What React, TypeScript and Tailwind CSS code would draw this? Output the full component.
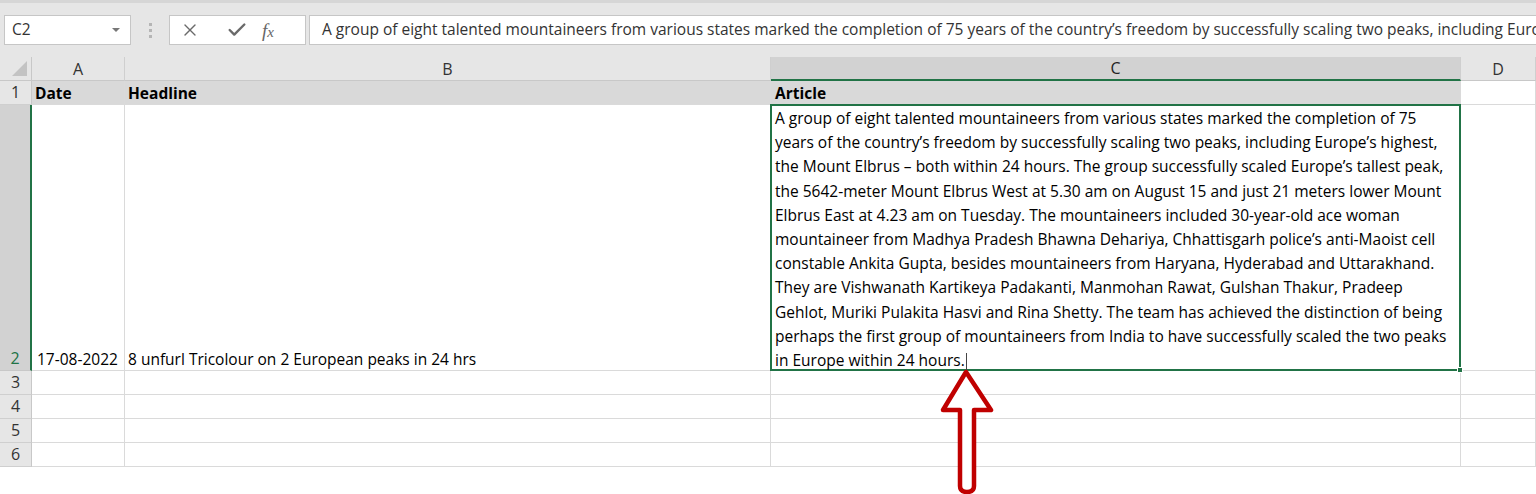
import { X, Check } from 'lucide-react'

const article = [
  'A group of eight talented mountaineers from various states marked the completion of 75',
  'years of the country’s freedom by successfully scaling two peaks, including Europe’s highest,',
  'the Mount Elbrus – both within 24 hours. The group successfully scaled Europe’s tallest peak,',
  'the 5642-meter Mount Elbrus West at 5.30 am on August 15 and just 21 meters lower Mount',
  'Elbrus East at 4.23 am on Tuesday. The mountaineers included 30-year-old ace woman',
  'mountaineer from Madhya Pradesh Bhawna Dehariya, Chhattisgarh police’s anti-Maoist cell',
  'constable Ankita Gupta, besides mountaineers from Haryana, Hyderabad and Uttarakhand.',
  'They are Vishwanath Kartikeya Padakanti, Manmohan Rawat, Gulshan Thakur, Pradeep',
  'Gehlot, Muriki Pulakita Hasvi and Rina Shetty. The team has achieved the distinction of being',
  'perhaps the first group of mountaineers from India to have successfully scaled the two peaks',
  'in Europe within 24 hours.',
]

const formulaText =
  'A group of eight talented mountaineers from various states marked the completion of 75 years of the country’s freedom by successfully scaling two peaks, including Europe’s highest, the Mount Elbrus – both within 24 hours.'

function Toolbar() {
  return (
    <div className="h-[57px] bg-[#e6e6e6] border-t-[3px] border-[#d6d6d6] flex items-start pt-[12px] pl-[4px] gap-0">
      <div className="w-[127px] h-[30px] bg-white border border-[#c6c6c6] flex items-center justify-between pl-[7px] pr-[10px]">
        <span className="text-[15.5px] text-[#333]">C2</span>
        <span className="w-0 h-0 border-l-[4px] border-r-[4px] border-t-[4px] border-l-transparent border-r-transparent border-t-[#777]" />
      </div>
      <div className="w-[38px] h-[30px] flex flex-col items-center justify-center gap-[3px]">
        <span className="w-[3px] h-[3px] bg-[#b5b5b5]" />
        <span className="w-[3px] h-[3px] bg-[#b5b5b5]" />
        <span className="w-[3px] h-[3px] bg-[#b5b5b5]" />
      </div>
      <div className="w-[137px] h-[30px] bg-white border border-[#c6c6c6] flex items-center">
        <X className="w-[20px] h-[20px] text-[#6a6a6a] ml-[10px]" strokeWidth={1.6} />
        <Check className="w-[22px] h-[22px] text-[#6a6a6a] ml-[26px]" strokeWidth={2.6} />
        <span className="ml-[14px] text-[19px] italic text-[#666] font-['Liberation_Serif',serif] leading-none">
          f<span className="text-[15px]">x</span>
        </span>
      </div>
      <div className="ml-[3px] flex-1 h-[30px] bg-white border border-[#c6c6c6] border-r-0 flex items-center pl-[12px] overflow-hidden">
        <span className="whitespace-nowrap text-[15.5px] text-[#333]">{formulaText}</span>
      </div>
    </div>
  )
}

function ColHead({ label, active }: { label: string; active?: boolean }) {
  return (
    <div
      className={`h-[24px] flex items-center justify-center text-[16px] border-r border-[#cfcfcf] ${
        active ? 'bg-[#d2d2d2] border-b-2 border-b-[#217346] text-[#222]' : 'bg-[#e6e6e6] border-b border-b-[#c8c8c8] text-[#333]'
      }`}
    >
      {label}
    </div>
  )
}

function RowHead({ n, h, active }: { n: number; h: string; active?: boolean }) {
  return (
    <div
      className={`${h} flex items-end justify-center pb-[1px] text-[16px] leading-[22px] border-b ${
        active
          ? 'bg-[#d2d2d2] border-b-[#c8c8c8] border-r-2 border-r-[#217346] text-[#217346]'
          : 'bg-[#e6e6e6] border-b-[#cfcfcf] border-r border-r-[#c8c8c8] text-[#333]'
      }`}
    >
      {n}
    </div>
  )
}

function Cell({ children, className = '' }: { children?: React.ReactNode; className?: string }) {
  return <div className={`border-r border-b border-[#dadada] ${className}`}>{children}</div>
}

export default function App() {
  return (
    <div className="w-[1536px] h-[494px] bg-white overflow-hidden relative font-['Open_Sans',sans-serif]">
      <Toolbar />
      <div className="grid grid-cols-[32px_93px_646px_690px_1fr]">
        {/* header row */}
        <div className="h-[24px] bg-[#e6e6e6] border-r border-b border-[#c8c8c8] flex items-end justify-end pr-[4px] pb-[4px]">
          <span className="w-0 h-0 border-l-[15px] border-b-[15px] border-l-transparent border-b-[#c3c3c3]" />
        </div>
        <ColHead label="A" />
        <ColHead label="B" />
        <ColHead label="C" active />
        <ColHead label="D" />

        {/* row 1 */}
        <RowHead n={1} h="h-[24px]" />
        <Cell className="bg-[#d9d9d9] border-[#d9d9d9] h-[24px] flex items-end pl-[3px] text-[15.5px] leading-[22px] font-bold text-black">Date</Cell>
        <Cell className="bg-[#d9d9d9] border-[#d9d9d9] h-[24px] flex items-end pl-[3px] text-[15.5px] leading-[22px] font-bold text-black">Headline</Cell>
        <Cell className="bg-[#d9d9d9] border-[#d9d9d9] h-[24px] flex items-end pl-[4px] text-[15.5px] leading-[22px] font-bold text-black">Article</Cell>
        <Cell className="h-[24px]" />

        {/* row 2 */}
        <RowHead n={2} h="h-[266px]" active />
        <Cell className="h-[266px] flex items-end pl-[5px] text-[15.5px] leading-[22px] text-black whitespace-nowrap">17-08-2022</Cell>
        <Cell className="h-[266px] flex items-end pl-[3px] text-[15.5px] leading-[22px] text-black whitespace-nowrap">
          8 unfurl Tricolour on 2 European peaks in 24 hrs
        </Cell>
        <div className="h-[267px] -mt-[1px] -ml-[1px] border-2 border-[#217346] relative pl-[3px] text-[15.5px] leading-[24.2px] text-black">
          {article.map((line, i) => (
            <div key={i} className="whitespace-nowrap">
              {line}
              {i === article.length - 1 && <span className="inline-block w-[1px] h-[18px] bg-[#444] align-middle ml-[1px]" />}
            </div>
          ))}
          <span className="absolute -right-[4px] -bottom-[4px] w-[6px] h-[6px] bg-[#217346] border border-white" />
        </div>
        <Cell className="h-[266px]" />

        {[3, 4, 5, 6].map((n) => (
          <div key={n} className="contents">
            <RowHead n={n} h="h-[24px]" />
            <Cell className="h-[24px]" />
            <Cell className="h-[24px]" />
            <Cell className="h-[24px]" />
            <Cell className="h-[24px]" />
          </div>
        ))}
      </div>

      <svg className="absolute left-[935px] top-[364px]" width="64" height="130" viewBox="0 0 64 130">
        <path
          d="M31 8 L56 46 L39 46 L39 122 Q39 128 32 128 Q25 128 25 122 L25 46 L8 46 Z"
          fill="white"
          stroke="#c00000"
          strokeWidth="4.5"
          strokeLinejoin="round"
        />
      </svg>
    </div>
  )
}
